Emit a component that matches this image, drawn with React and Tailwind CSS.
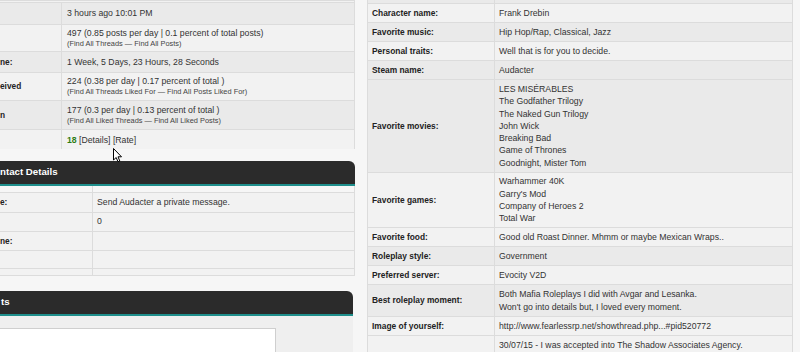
import React from 'react';

const LIGHT = 'bg-[#f2f2f2]';
const DARK = 'bg-[#eaeaea]';

// Linke Tabelle (Statistik), Beschriftungen links abgeschnitten
const statsRows = [
  { h: 'h-[22px]', bg: DARK, label: '', main: '3 hours ago 10:01 PM' },
  { h: 'h-[27px]', bg: LIGHT, label: '', main: '497 (0.85 posts per day | 0.1 percent of total posts)', sub: '(Find All Threads — Find All Posts)' },
  { h: 'h-[21px]', bg: DARK, label: 'ne:', main: '1 Week, 5 Days, 23 Hours, 28 Seconds' },
  { h: 'h-[28px]', bg: LIGHT, label: 'eived', main: '224 (0.38 per day | 0.17 percent of total )', sub: '(Find All Threads Liked For — Find All Posts Liked For)' },
  { h: 'h-[29px]', bg: DARK, label: 'n', main: '177 (0.3 per day | 0.13 percent of total )', sub: '(Find All Liked Threads — Find All Liked Posts)' },
  { h: 'h-[20px]', bg: LIGHT, label: '', rep: true },
];

const contactRows = [
  { h: 'h-[6px]', bg: 'bg-[#f6f6f6]', label: '', value: '' },
  { h: 'h-[20px]', bg: LIGHT, label: 'e:', value: 'Send Audacter a private message.' },
  { h: 'h-[19px]', bg: LIGHT, label: '', value: '0' },
  { h: 'h-[19px]', bg: LIGHT, label: 'ne:', value: '' },
  { h: 'h-[18px]', bg: LIGHT, label: '', value: '' },
  { h: 'h-[7px]', bg: LIGHT, label: '', value: '' },
];

// Rechte Tabelle (Profilfelder)
const profileRows = [
  { h: 'h-[4px]', bg: DARK, label: '', lines: [] },
  { h: 'h-[19px]', bg: LIGHT, label: 'Character name:', lines: ['Frank Drebin'] },
  { h: 'h-[19px]', bg: DARK, label: 'Favorite music:', lines: ['Hip Hop/Rap, Classical, Jazz'] },
  { h: 'h-[19px]', bg: LIGHT, label: 'Personal traits:', lines: ['Well that is for you to decide.'] },
  { h: 'h-[19px]', bg: DARK, label: 'Steam name:', lines: ['Audacter'] },
  {
    h: 'h-[93px]', bg: DARK, label: 'Favorite movies:',
    lines: ['LES MISÉRABLES', 'The Godfather Trilogy', 'The Naked Gun Trilogy', 'John Wick', 'Breaking Bad', 'Game of Thrones', 'Goodnight, Mister Tom'],
  },
  { h: 'h-[55px]', bg: LIGHT, label: 'Favorite games:', lines: ['Warhammer 40K', "Garry's Mod", 'Company of Heroes 2', 'Total War'] },
  { h: 'h-[19px]', bg: LIGHT, label: 'Favorite food:', lines: ['Good old Roast Dinner. Mhmm or maybe Mexican Wraps..'] },
  { h: 'h-[19px]', bg: DARK, label: 'Roleplay style:', lines: ['Government'] },
  { h: 'h-[19px]', bg: LIGHT, label: 'Preferred server:', lines: ['Evocity V2D'] },
  { h: 'h-[32px]', bg: DARK, label: 'Best roleplay moment:', lines: ['Both Mafia Roleplays I did with Avgar and Lesanka.', "Won't go into details but, I loved every moment."] },
  { h: 'h-[19px]', bg: LIGHT, label: 'Image of yourself:', lines: ['http://www.fearlessrp.net/showthread.php...#pid520772'] },
  { h: 'h-[30px]', bg: LIGHT, label: '', lines: ['30/07/15 - I was accepted into The Shadow Associates Agency.'], top: true },
];

function Header({ children, width }) {
  return (
    <div className={`${width} h-[25px] bg-[#2b2b2b] border-b-2 border-[#1f8f8c] rounded-tr-[6px] flex items-center text-white font-bold text-[9.7px] whitespace-nowrap`}>
      {children}
    </div>
  );
}

export default function App() {
  return (
    <div className="relative w-[800px] h-[352px] overflow-hidden bg-[#f6f6f6] text-[#333] font-['Liberation_Sans',Arial,sans-serif] text-[8.7px]">
      <div className="flex gap-[12px]">
        {/* linke Spalte */}
        <div className="w-[355px] flex flex-col">
          <div className="border-r border-[#dcdcdc] border-t border-t-[#dcdcdc]">
            <div className="h-[1px] bg-[#f2f2f2]"></div>
            {statsRows.map((r, i) => (
              <div key={i} className={`flex ${r.h} ${r.bg} border-t border-[#dcdcdc]`}>
                <div className="w-[62px] shrink-0 border-r border-[#dcdcdc] flex items-center font-bold text-[#222] text-[8.3px] whitespace-nowrap">
                  {r.label}
                </div>
                <div className="flex-1 pl-[5px] flex flex-col justify-center whitespace-nowrap">
                  {r.rep ? (
                    <div className="leading-[12px]">
                      <span className="font-bold text-[#2f7d14]">18</span> [Details] [Rate]
                    </div>
                  ) : (
                    <>
                      <div className="leading-[11px]">{r.main}</div>
                      {r.sub && <div className="text-[7.4px] leading-[10px] text-[#444]">{r.sub}</div>}
                    </>
                  )}
                </div>
              </div>
            ))}
          </div>

          <div className="mt-[12px]">
            <Header width="w-[355px]">
              <span>ntact Details</span>
            </Header>
            <div className="border-r border-b border-[#dcdcdc]">
              {contactRows.map((r, i) => (
                <div key={i} className={`flex ${r.h} ${r.bg} ${i > 0 ? 'border-t border-[#dcdcdc]' : ''}`}>
                  <div className="w-[93px] shrink-0 border-r border-[#dcdcdc] flex items-center font-bold text-[#222] text-[8.3px] whitespace-nowrap">
                    {r.label}
                  </div>
                  <div className="flex-1 pl-[4px] flex items-center whitespace-nowrap">{r.value}</div>
                </div>
              ))}
            </div>
          </div>

          <div className="mt-[15px]">
            <Header width="w-[353px]">
              <span className="pl-[1px]">ts</span>
            </Header>
            <div className="w-[353px] h-[60px] bg-[#efefef] pt-[12px] flex">
              <div className="w-[276px] h-[48px] bg-white border border-l-0 border-[#cfcfcf]"></div>
            </div>
          </div>
        </div>

        {/* rechte Spalte */}
        <div className="w-[426px] border-l border-r border-[#dcdcdc]">
          {profileRows.map((r, i) => (
            <div key={i} className={`flex ${r.h} ${r.bg} border-b border-[#dcdcdc]`}>
              <div className="w-[127px] shrink-0 border-r border-[#dcdcdc] pl-[4px] flex items-center font-bold text-[#222] text-[8.4px] whitespace-nowrap">
                {r.label}
              </div>
              <div className={`flex-1 pl-[4px] flex flex-col ${r.top ? 'justify-start pt-[3px]' : 'justify-center'} whitespace-nowrap`}>
                {r.lines.map((l, j) => (
                  <div key={j} className="leading-[12.3px]">{l}</div>
                ))}
              </div>
            </div>
          ))}
        </div>
      </div>

      {/* Mauszeiger */}
      <svg className="absolute left-[113px] top-[148px]" width="10" height="15" viewBox="0 0 10 15">
        <path d="M0.5 0.5 L0.5 12 L3.2 9.5 L5 13.8 L6.8 13 L5 8.8 L8.5 8.8 Z" fill="#fff" stroke="#000" strokeWidth="1" strokeLinejoin="round" />
      </svg>
    </div>
  );
}
